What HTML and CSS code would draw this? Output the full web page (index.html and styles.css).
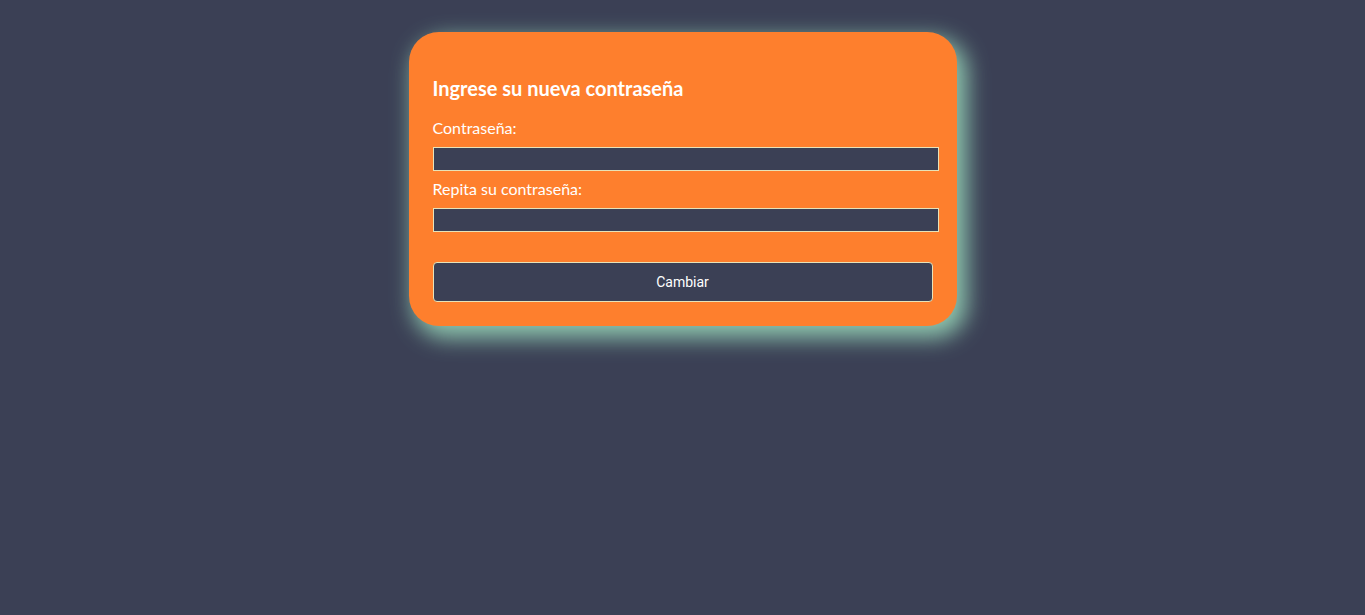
FILE: index.html
```html
<!DOCTYPE html>
<html lang="es">
<head>
<meta charset="utf-8">
<title>Cambiar contraseña</title>
<link rel="stylesheet" href="styles.css">
</head>
<body>
<main class="page">
  <form class="card">
    <h2 class="title">Ingrese su nueva contraseña</h2>
    <label class="label" for="p1">Contraseña:</label>
    <input class="field" id="p1" type="password">
    <label class="label" for="p2">Repita su contraseña:</label>
    <input class="field" id="p2" type="password">
    <button class="btn" type="button">Cambiar</button>
  </form>
</main>
</body>
</html>
```
FILE: styles.css
```css
html, body {
  margin: 0;
  padding: 0;
  background: #3b4055;
  height: 100%;
}
.page {
  display: flex;
  justify-content: center;
  padding-top: 32px;
}
.card {
  width: 548px;
  box-sizing: border-box;
  background: #fe7f2d;
  border-radius: 30px;
  padding: 44px 18px 24px 24px;
  display: flex;
  flex-direction: column;
  box-shadow: 7px 9px 22px 3px #8ec6ae;
  font-family: "Lato", "Open Sans", sans-serif;
  color: #fff;
}
.title {
  margin: 0 0 18px;
  font-size: 20px;
  font-weight: 700;
  line-height: 24px;
}
.label {
  font-size: 16px;
  line-height: 20px;
  margin-bottom: 9px;
}
.field {
  height: 24px;
  box-sizing: border-box;
  background: #3b4055;
  border: 1px solid #e8e3b8;
  margin: 0 0 8px;
  padding: 0;
  width: 506px;
}
.btn {
  margin-top: 22px;
  width: 500px;
  height: 40px;
  background: #3b4055;
  border: 1px solid #e8e3b8;
  border-radius: 4px;
  color: #fff;
  font-family: "Roboto", "Liberation Sans", sans-serif;
  font-size: 14px;
}
```
